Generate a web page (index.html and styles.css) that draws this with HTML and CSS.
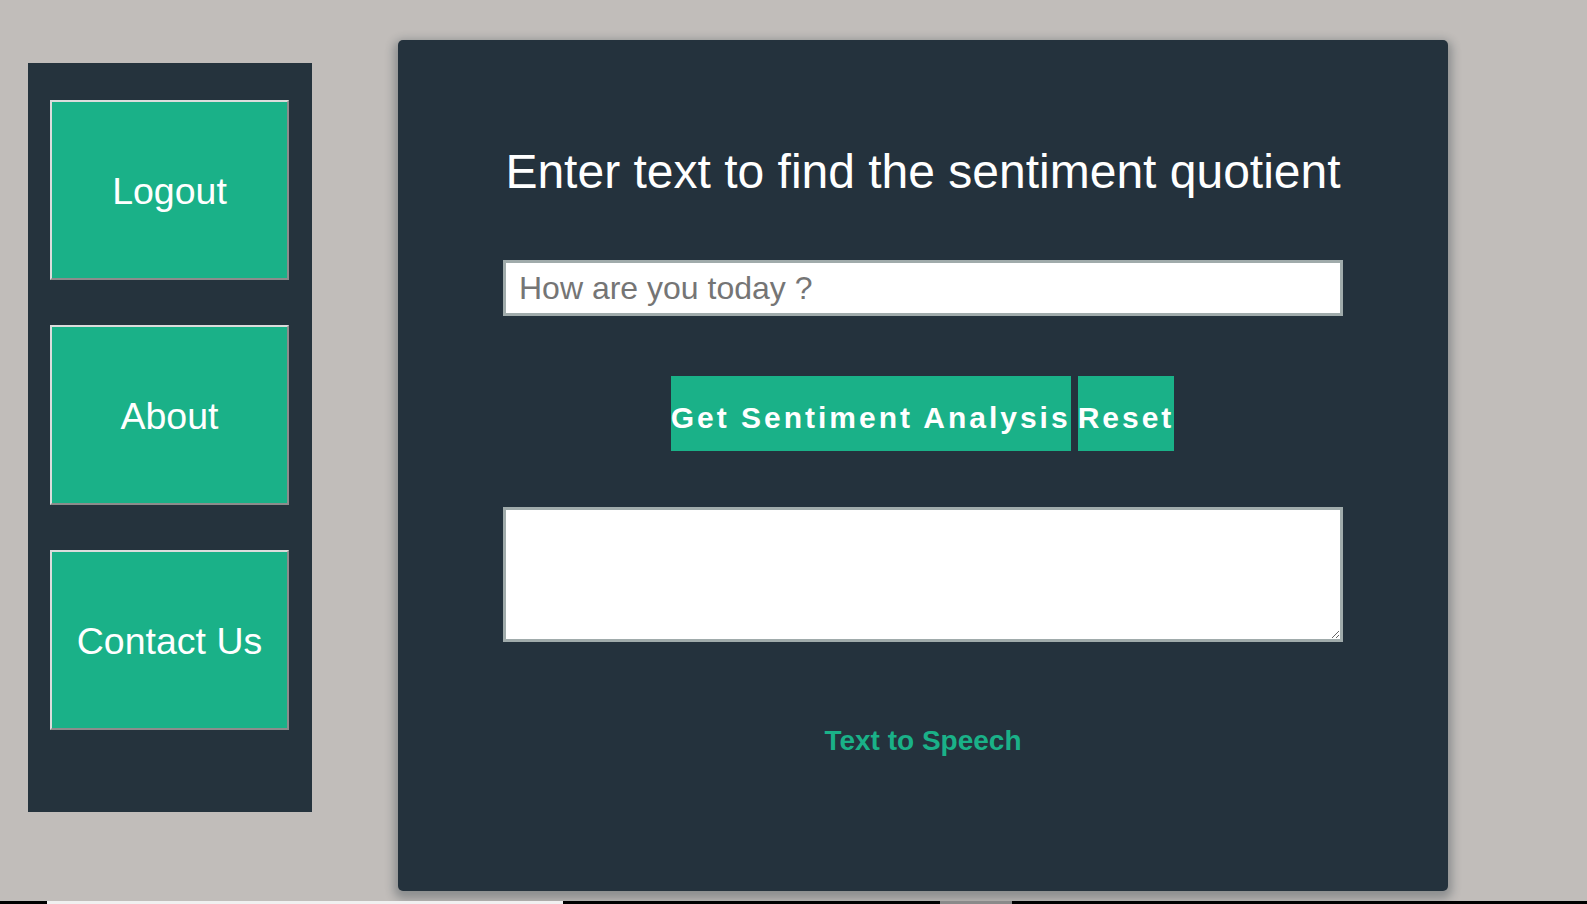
FILE: index.html
```html
<!DOCTYPE html>
<html lang="en">
<head>
<meta charset="utf-8">
<title>Sentiment Analysis</title>
<link rel="stylesheet" href="styles.css">
</head>
<body>
<div class="page">
  <nav class="sidebar">
    <button class="nav-btn">Logout</button>
    <button class="nav-btn">About</button>
    <button class="nav-btn">Contact Us</button>
  </nav>
  <main class="card">
    <h1 class="title">Enter text to find the sentiment quotient</h1>
    <input class="text-input" type="text" placeholder="How are you today ?">
    <div class="actions">
      <button class="action-btn">Get Sentiment Analysis</button>
      <button class="action-btn">Reset</button>
    </div>
    <textarea class="result"></textarea>
    <a class="speech" href="#">Text to Speech</a>
  </main>
</div>
<div class="taskbar">
  <span class="tb-black tb-a"></span>
  <span class="tb-light"></span>
  <span class="tb-black tb-b"></span>
  <span class="tb-gray"></span>
  <span class="tb-black tb-c"></span>
</div>
</body>
</html>
```

FILE: styles.css
```css
* { box-sizing: border-box; }

html, body {
  margin: 0;
  height: 100%;
  overflow: hidden;
}

body {
  background: #c1bdba;
  font-family: "Liberation Sans", Arial, sans-serif;
}

.page {
  display: flex;
  align-items: flex-start;
  padding-left: 28px;
}

.sidebar {
  margin-top: 63px;
  width: 284px;
  height: 749px;
  background: #25333d;
  padding: 37px 23px 0 22px;
  display: flex;
  flex-direction: column;
  gap: 45px;
}

.nav-btn {
  width: 239px;
  height: 180px;
  background: #1ab188;
  color: #ffffff;
  font-family: "Liberation Sans", Arial, sans-serif;
  font-size: 37.5px;
  border-style: solid;
  border-width: 2px;
  border-color: #dcdcdc #8c8c8c #8c8c8c #dcdcdc;
  padding: 2px 0 0;
  cursor: pointer;
}

.card {
  margin-left: 86px;
  margin-top: 40px;
  width: 1050px;
  height: 851px;
  background: #24323d;
  border-radius: 5px;
  box-shadow: 0 4px 10px 4px rgba(19, 35, 47, 0.3);
  display: flex;
  flex-direction: column;
  align-items: center;
}

.title {
  margin: 108px 0 0;
  font-size: 48px;
  line-height: 48px;
  font-weight: normal;
  color: #ffffff;
}

.text-input {
  margin-top: 64px;
  width: 840px;
  height: 56px;
  border: 3px solid #a0abab;
  background: #ffffff;
  padding: 0 13px;
  font-family: "Liberation Sans", Arial, sans-serif;
  font-size: 32px;
  color: #333;
  outline: none;
}

.text-input::placeholder {
  color: #757575;
}

.actions {
  margin-top: 60px;
  display: flex;
  gap: 7px;
  margin-left: -1px;
}

.action-btn {
  height: 75px;
  padding: 8px 0 0;
  border: none;
  background: #1ab188;
  color: #ffffff;
  font-family: "Liberation Sans", Arial, sans-serif;
  font-weight: bold;
  font-size: 30px;
  letter-spacing: 3px;
  cursor: pointer;
}

.result {
  margin-top: 56px;
  width: 840px;
  height: 135px;
  border: 3px solid #a0abab;
  background: #ffffff;
  resize: both;
  outline: none;
  font-family: "Liberation Sans", Arial, sans-serif;
}

.speech {
  margin-top: 84px;
  font-size: 28px;
  line-height: 30px;
  font-weight: bold;
  color: #1ab188;
  text-decoration: none;
}

.taskbar {
  position: fixed;
  left: 0;
  right: 0;
  bottom: 0;
  height: 3px;
  display: flex;
}

.taskbar span { display: block; height: 100%; }
.tb-black { background: #000000; }
.tb-a { width: 47px; }
.tb-light { width: 516px; background: #f0f0f0; }
.tb-b { width: 377px; }
.tb-gray { width: 72px; background: #8a8a8a; }
.tb-c { flex: 1; }
```
